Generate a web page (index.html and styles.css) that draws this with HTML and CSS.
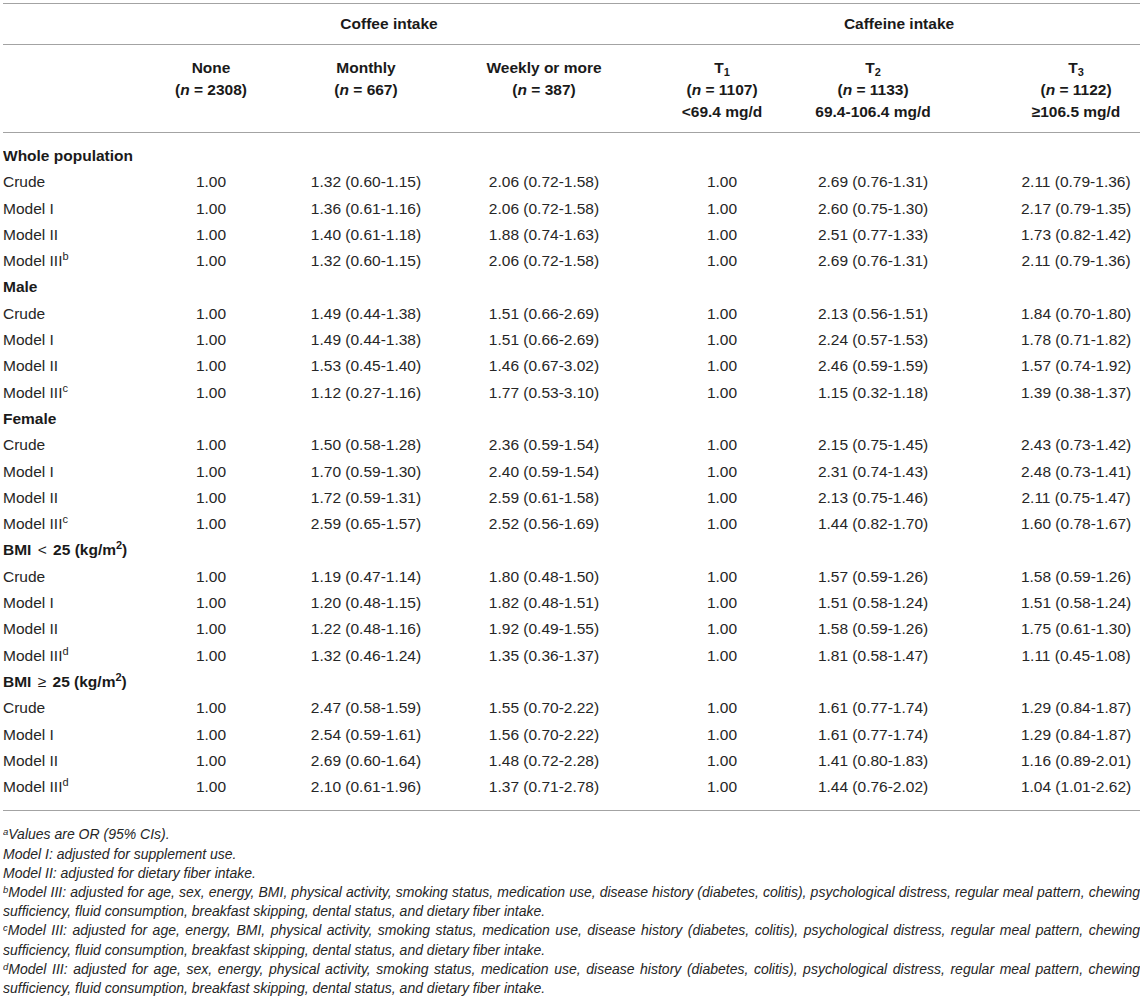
FILE: index.html
```html
<!DOCTYPE html>
<html lang="en">
<head>
    <meta charset="UTF-8">
    <title>Coffee and caffeine intake</title>
    <link rel="stylesheet" href="styles.css">
</head>
<body>
    <table class="data">
        <colgroup>
            <col class="c-label">
            <col class="c-none">
            <col class="c-month">
            <col class="c-week">
            <col class="c-t1">
            <col class="c-t2">
            <col class="c-t3">
        </colgroup>
        <thead>
            <tr class="group">
                <th></th>
                <th colspan="3">Coffee intake</th>
                <th colspan="3" class="caff">Caffeine intake</th>
            </tr>
            <tr class="cats">
                <th></th>
                <th>None<br>(<i>n</i> = 2308)</th>
                <th>Monthly<br>(<i>n</i> = 667)</th>
                <th>Weekly or more<br>(<i>n</i> = 387)</th>
                <th>T<sub>1</sub><br>(<i>n</i> = 1107)<br>&lt;69.4 mg/d</th>
                <th>T<sub>2</sub><br>(<i>n</i> = 1133)<br>69.4-106.4 mg/d</th>
                <th class="last">T<sub>3</sub><br>(<i>n</i> = 1122)<br>&ge;106.5 mg/d</th>
            </tr>
        </thead>
        <tbody>
            <tr class="section first"><th colspan="7">Whole population</th></tr>
            <tr><td>Crude</td><td>1.00</td><td>1.32 (0.60-1.15)</td><td>2.06 (0.72-1.58)</td><td>1.00</td><td>2.69 (0.76-1.31)</td><td class="last">2.11 (0.79-1.36)</td></tr>
            <tr><td>Model I</td><td>1.00</td><td>1.36 (0.61-1.16)</td><td>2.06 (0.72-1.58)</td><td>1.00</td><td>2.60 (0.75-1.30)</td><td class="last">2.17 (0.79-1.35)</td></tr>
            <tr><td>Model II</td><td>1.00</td><td>1.40 (0.61-1.18)</td><td>1.88 (0.74-1.63)</td><td>1.00</td><td>2.51 (0.77-1.33)</td><td class="last">1.73 (0.82-1.42)</td></tr>
            <tr><td>Model III<sup>b</sup></td><td>1.00</td><td>1.32 (0.60-1.15)</td><td>2.06 (0.72-1.58)</td><td>1.00</td><td>2.69 (0.76-1.31)</td><td class="last">2.11 (0.79-1.36)</td></tr>

            <tr class="section"><th colspan="7">Male</th></tr>
            <tr><td>Crude</td><td>1.00</td><td>1.49 (0.44-1.38)</td><td>1.51 (0.66-2.69)</td><td>1.00</td><td>2.13 (0.56-1.51)</td><td class="last">1.84 (0.70-1.80)</td></tr>
            <tr><td>Model I</td><td>1.00</td><td>1.49 (0.44-1.38)</td><td>1.51 (0.66-2.69)</td><td>1.00</td><td>2.24 (0.57-1.53)</td><td class="last">1.78 (0.71-1.82)</td></tr>
            <tr><td>Model II</td><td>1.00</td><td>1.53 (0.45-1.40)</td><td>1.46 (0.67-3.02)</td><td>1.00</td><td>2.46 (0.59-1.59)</td><td class="last">1.57 (0.74-1.92)</td></tr>
            <tr><td>Model III<sup>c</sup></td><td>1.00</td><td>1.12 (0.27-1.16)</td><td>1.77 (0.53-3.10)</td><td>1.00</td><td>1.15 (0.32-1.18)</td><td class="last">1.39 (0.38-1.37)</td></tr>

            <tr class="section"><th colspan="7">Female</th></tr>
            <tr><td>Crude</td><td>1.00</td><td>1.50 (0.58-1.28)</td><td>2.36 (0.59-1.54)</td><td>1.00</td><td>2.15 (0.75-1.45)</td><td class="last">2.43 (0.73-1.42)</td></tr>
            <tr><td>Model I</td><td>1.00</td><td>1.70 (0.59-1.30)</td><td>2.40 (0.59-1.54)</td><td>1.00</td><td>2.31 (0.74-1.43)</td><td class="last">2.48 (0.73-1.41)</td></tr>
            <tr><td>Model II</td><td>1.00</td><td>1.72 (0.59-1.31)</td><td>2.59 (0.61-1.58)</td><td>1.00</td><td>2.13 (0.75-1.46)</td><td class="last">2.11 (0.75-1.47)</td></tr>
            <tr><td>Model III<sup>c</sup></td><td>1.00</td><td>2.59 (0.65-1.57)</td><td>2.52 (0.56-1.69)</td><td>1.00</td><td>1.44 (0.82-1.70)</td><td class="last">1.60 (0.78-1.67)</td></tr>

            <tr class="section"><th colspan="7">BMI <span class="rel">&lt;</span> 25 (kg/m<sup>2</sup>)</th></tr>
            <tr><td>Crude</td><td>1.00</td><td>1.19 (0.47-1.14)</td><td>1.80 (0.48-1.50)</td><td>1.00</td><td>1.57 (0.59-1.26)</td><td class="last">1.58 (0.59-1.26)</td></tr>
            <tr><td>Model I</td><td>1.00</td><td>1.20 (0.48-1.15)</td><td>1.82 (0.48-1.51)</td><td>1.00</td><td>1.51 (0.58-1.24)</td><td class="last">1.51 (0.58-1.24)</td></tr>
            <tr><td>Model II</td><td>1.00</td><td>1.22 (0.48-1.16)</td><td>1.92 (0.49-1.55)</td><td>1.00</td><td>1.58 (0.59-1.26)</td><td class="last">1.75 (0.61-1.30)</td></tr>
            <tr><td>Model III<sup>d</sup></td><td>1.00</td><td>1.32 (0.46-1.24)</td><td>1.35 (0.36-1.37)</td><td>1.00</td><td>1.81 (0.58-1.47)</td><td class="last">1.11 (0.45-1.08)</td></tr>

            <tr class="section"><th colspan="7">BMI <span class="rel">&ge;</span> 25 (kg/m<sup>2</sup>)</th></tr>
            <tr><td>Crude</td><td>1.00</td><td>2.47 (0.58-1.59)</td><td>1.55 (0.70-2.22)</td><td>1.00</td><td>1.61 (0.77-1.74)</td><td class="last">1.29 (0.84-1.87)</td></tr>
            <tr><td>Model I</td><td>1.00</td><td>2.54 (0.59-1.61)</td><td>1.56 (0.70-2.22)</td><td>1.00</td><td>1.61 (0.77-1.74)</td><td class="last">1.29 (0.84-1.87)</td></tr>
            <tr><td>Model II</td><td>1.00</td><td>2.69 (0.60-1.64)</td><td>1.48 (0.72-2.28)</td><td>1.00</td><td>1.41 (0.80-1.83)</td><td class="last">1.16 (0.89-2.01)</td></tr>
            <tr class="end"><td>Model III<sup>d</sup></td><td>1.00</td><td>2.10 (0.61-1.96)</td><td>1.37 (0.71-2.78)</td><td>1.00</td><td>1.44 (0.76-2.02)</td><td class="last">1.04 (1.01-2.62)</td></tr>
        </tbody>
    </table>

    <div class="notes">
        <p><sup>a</sup>Values are OR (95% CIs).</p>
        <p>Model I: adjusted for supplement use.</p>
        <p>Model II: adjusted for dietary fiber intake.</p>
        <p><sup>b</sup>Model III: adjusted for age, sex, energy, BMI, physical activity, smoking status, medication use, disease history (diabetes, colitis), psychological distress, regular meal pattern, chewing sufficiency, fluid consumption, breakfast skipping, dental status, and dietary fiber intake.</p>
        <p><sup>c</sup>Model III: adjusted for age, energy, BMI, physical activity, smoking status, medication use, disease history (diabetes, colitis), psychological distress, regular meal pattern, chewing sufficiency, fluid consumption, breakfast skipping, dental status, and dietary fiber intake.</p>
        <p><sup>d</sup>Model III: adjusted for age, sex, energy, physical activity, smoking status, medication use, disease history (diabetes, colitis), psychological distress, regular meal pattern, chewing sufficiency, fluid consumption, breakfast skipping, dental status, and dietary fiber intake.</p>
    </div>
</body>
</html>
```

FILE: styles.css
```css
body {
    margin: 3px 3px 0 3px;
    background: #ffffff;
    color: #262626;
    font-family: "Liberation Sans", Arial, sans-serif;
}

.data {
    width: 1137px;
    table-layout: fixed;
    border-collapse: collapse;
    font-size: 15.5px;
}
.c-label { width: 134px; }
.c-none { width: 148px; }
.c-month { width: 162px; }
.c-week { width: 194px; }
.c-t1 { width: 162px; }
.c-t2 { width: 140px; }
.c-t3 { width: 197px; }

.data th,
.data td {
    padding: 0;
    text-align: center;
    vertical-align: top;
}

/* header */
.data thead th {
    color: #1a1a1a;
    font-weight: bold;
    line-height: 22px;
}
.group th {
    padding: 9px 0;
    border-top: 1px solid #a3a3a3;
    border-bottom: 1px solid #a3a3a3;
}
.group th.caff {
    padding-left: 17px;
}
.cats th {
    padding: 12px 0 9px;
    border-bottom: 1px solid #a3a3a3;
}
.data i {
    font-style: italic;
}
.data sub {
    font-size: 11px;
    line-height: 0;
    vertical-align: -3px;
}
.data sup {
    font-size: 11px;
    line-height: 0;
    vertical-align: 6px;
}

/* body */
.data tbody td {
    line-height: 26.3px;
}
.data tbody td:first-child {
    text-align: left;
}
.data .last {
    padding-left: 69px;
}
.section th {
    text-align: left;
    color: #1a1a1a;
    line-height: 26.3px;
}
.section .rel {
    font-weight: normal;
    padding: 0 2px;
}
.section.first th {
    padding-top: 10px;
}
.end td {
    padding-bottom: 10px;
    border-bottom: 1px solid #a3a3a3;
}

/* footnotes */
.notes {
    margin-top: 14px;
    font-size: 14px;
    font-style: italic;
    line-height: 19.2px;
    color: #262626;
    text-align: justify;
}
.notes p {
    margin: 0;
}
.notes sup {
    font-size: 9.5px;
    line-height: 0;
    vertical-align: 4px;
}
```
